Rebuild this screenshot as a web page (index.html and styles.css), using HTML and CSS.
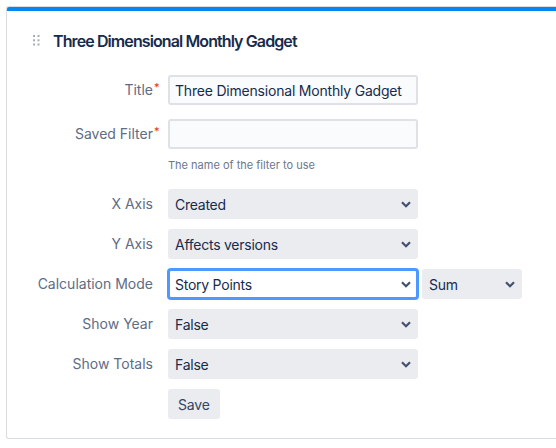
FILE: index.html
```html
<!DOCTYPE html>
<html>
<head>
<meta charset="utf-8">
<link rel="stylesheet" href="styles.css">
</head>
<body>
<div class="card">
  <div class="card-bar"></div>
  <div class="card-head">
    <svg class="handle" width="7" height="11" viewBox="0 0 7 11">
      <rect x="0" y="0" width="2" height="2"/><rect x="4.5" y="0" width="2" height="2"/>
      <rect x="0" y="4.3" width="2" height="2"/><rect x="4.5" y="4.3" width="2" height="2"/>
      <rect x="0" y="8.5" width="2" height="2"/><rect x="4.5" y="8.5" width="2" height="2"/>
    </svg>
    <h2 class="card-title">Three Dimensional Monthly Gadget</h2>
  </div>
  <form class="form">
    <div class="row row-title">
      <label class="label">Title<span class="req">*</span></label>
      <div class="field"><input class="text" value="Three Dimensional Monthly Gadget"></div>
    </div>
    <div class="row">
      <label class="label">Saved Filter<span class="req">*</span></label>
      <div class="field">
        <input class="text" value="">
        <div class="help">The name of the filter to use</div>
      </div>
    </div>
    <div class="row">
      <label class="label">X Axis</label>
      <div class="field"><div class="select"><span>Created</span><svg class="chev" viewBox="0 0 10 7"><path d="M1 1.2L5 5.2l4-4"/></svg></div></div>
    </div>
    <div class="row">
      <label class="label">Y Axis</label>
      <div class="field"><div class="select"><span>Affects versions</span><svg class="chev" viewBox="0 0 10 7"><path d="M1 1.2L5 5.2l4-4"/></svg></div></div>
    </div>
    <div class="row">
      <label class="label">Calculation Mode</label>
      <div class="field inline">
        <div class="select focused"><span>Story Points</span><svg class="chev" viewBox="0 0 10 7"><path d="M1 1.2L5 5.2l4-4"/></svg></div>
        <div class="select small"><span>Sum</span><svg class="chev" viewBox="0 0 10 7"><path d="M1 1.2L5 5.2l4-4"/></svg></div>
      </div>
    </div>
    <div class="row">
      <label class="label">Show Year</label>
      <div class="field"><div class="select"><span>False</span><svg class="chev" viewBox="0 0 10 7"><path d="M1 1.2L5 5.2l4-4"/></svg></div></div>
    </div>
    <div class="row">
      <label class="label">Show Totals</label>
      <div class="field"><div class="select"><span>False</span><svg class="chev" viewBox="0 0 10 7"><path d="M1 1.2L5 5.2l4-4"/></svg></div></div>
    </div>
    <div class="row">
      <div class="label"></div>
      <div class="field"><button type="button" class="btn">Save</button></div>
    </div>
  </form>
</div>
</body>
</html>
```

FILE: styles.css
```css
* { box-sizing: border-box; }
html, body { margin: 0; padding: 0; background: #fff; }
body {
  font-family: Inter, "Noto Sans", sans-serif;
  font-size: 14px;
  color: #172b4d;
  padding: 6px 0 0 6px;
}
.card {
  width: 550px;
  height: 433px;
  border: 1px solid #d9dce1;
  border-right: none;
  border-radius: 3px 0 0 3px;
  background: #fff;
  overflow: hidden;
}
.card-bar { height: 4px; background: #0786f2; }
.card-head {
  display: flex;
  align-items: center;
  height: 59px;
  padding-left: 26px;
}
.handle { fill: #a5adba; margin-right: 13px; }
.card-title {
  margin: 0;
  font-size: 16px;
  font-weight: 600;
  letter-spacing: -0.9px;
  color: #172b4d;
}
.form { padding-top: 5px; }
.row {
  display: grid;
  grid-template-columns: 146px 250px;
  column-gap: 15px;
  margin-bottom: 10px;
}
.row-title { margin-bottom: 14px; }
.label {
  position: relative;
  text-align: right;
  color: #5e6c84;
  line-height: 30px;
}
.req {
  position: absolute;
  color: #de350b;
  font-size: 11px;
  line-height: 20px;
  top: 2px;
  margin-left: 1px;
}
.text {
  display: block;
  width: 250px;
  height: 30px;
  border: 2px solid #dfe1e6;
  border-radius: 3px;
  background: #fafbfc;
  padding: 0 5px;
  font: inherit;
  letter-spacing: -0.2px;
  color: #172b4d;
}
.help {
  font-size: 11px;
  line-height: 13px;
  color: #6b778c;
  margin-top: 10px;
  margin-bottom: 7px;
}
.select {
  display: flex;
  align-items: center;
  justify-content: space-between;
  width: 250px;
  height: 30px;
  background: #ebecf0;
  border-radius: 3px;
  padding: 0 7px 0 7px;
  color: #172b4d;
  letter-spacing: -0.25px;
}
.chev { width: 10px; height: 7px; fill: none; stroke: #42526e; stroke-width: 2.2; }
.inline { display: flex; gap: 4px; width: 360px; }
.select.focused {
  background: #fff;
  border: 2px solid #4c9aff;
  box-shadow: 0 0 0 1px #4c9aff;
  padding: 0 5px;
}
.select.small { width: 100px; flex: none; }
.btn {
  height: 30px;
  padding: 0 10px;
  border: none;
  border-radius: 3px;
  background: #ebecf0;
  color: #344563;
  font: inherit;
  letter-spacing: -0.2px;
}
```
